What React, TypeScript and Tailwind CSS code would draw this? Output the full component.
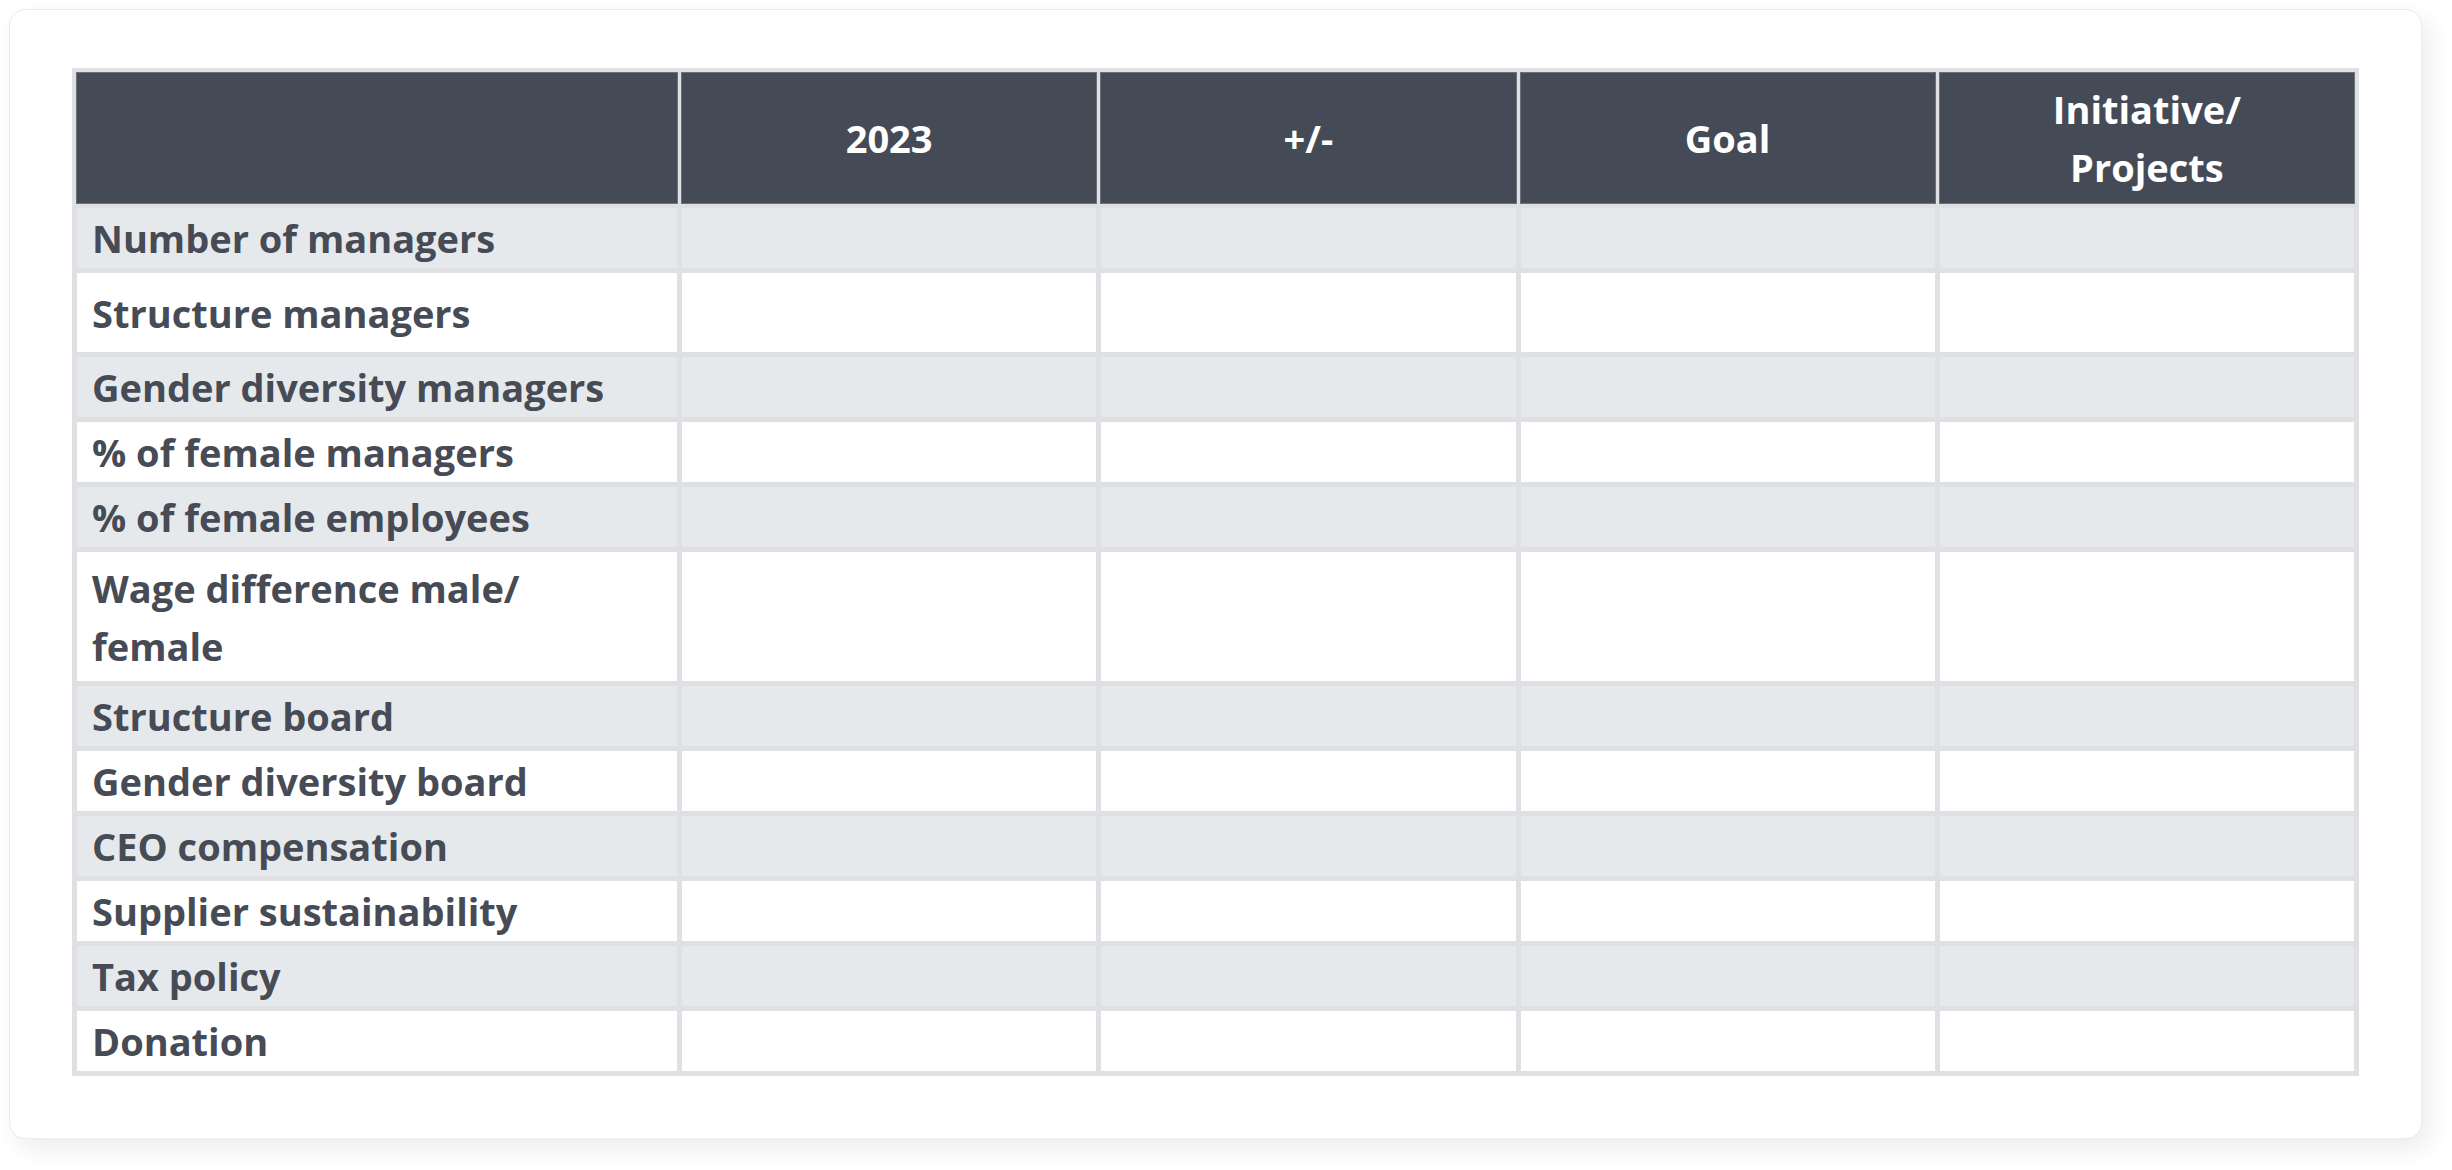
import React from 'react';

type Row = { label: string; h: string };

const rows: Row[] = [
  { label: 'Number of managers', h: 'h-[60px]' },
  { label: 'Structure managers', h: 'h-[79px]' },
  { label: 'Gender diversity managers', h: 'h-[60px]' },
  { label: '% of female managers', h: 'h-[60px]' },
  { label: '% of female employees', h: 'h-[60px]' },
  { label: 'Wage difference male/\nfemale', h: 'h-[129px]' },
  { label: 'Structure board', h: 'h-[60px]' },
  { label: 'Gender diversity board', h: 'h-[60px]' },
  { label: 'CEO compensation', h: 'h-[60px]' },
  { label: 'Supplier sustainability', h: 'h-[60px]' },
  { label: 'Tax policy', h: 'h-[60px]' },
  { label: 'Donation', h: 'h-[60px]' },
];

const headers = ['2023', '+/-', 'Goal', 'Initiative/ Projects'];

const App: React.FC = () => {
  return (
    <div className="min-h-screen bg-white p-[9px] font-['Open_Sans',sans-serif]">
      <div className="w-[2413px] rounded-2xl border border-[#ececee] bg-white pt-[58px] pb-[62px] px-[62px] shadow-[8px_10px_22px_rgba(40,55,80,0.09)]">
        <div className="grid w-[2287px] grid-cols-[600px_1fr_1fr_1fr_1fr] gap-[5px] bg-[#dfe0e4] p-[5px] text-[38px] font-bold leading-[58px]">
          <div className="h-[130px] bg-[#454b56] outline outline-1 outline-[#6b7079]" />
          {headers.map((h) => (
            <div
              key={h}
              className="flex h-[130px] items-center justify-center bg-[#454b56] px-[80px] text-center text-white outline outline-1 outline-[#6b7079]"
            >
              {h}
            </div>
          ))}
          {rows.map((r, i) => {
            const bg = i % 2 === 0 ? 'bg-[#e6e9ec]' : 'bg-white';
            return (
              <React.Fragment key={r.label}>
                <div className={`${r.h} ${bg} flex items-center whitespace-pre-line pl-[15px] pr-[12px] text-[#464b55]`}>
                  {r.label}
                </div>
                <div className={`${r.h} ${bg}`} />
                <div className={`${r.h} ${bg}`} />
                <div className={`${r.h} ${bg}`} />
                <div className={`${r.h} ${bg}`} />
              </React.Fragment>
            );
          })}
        </div>
      </div>
    </div>
  );
};

export default App;
